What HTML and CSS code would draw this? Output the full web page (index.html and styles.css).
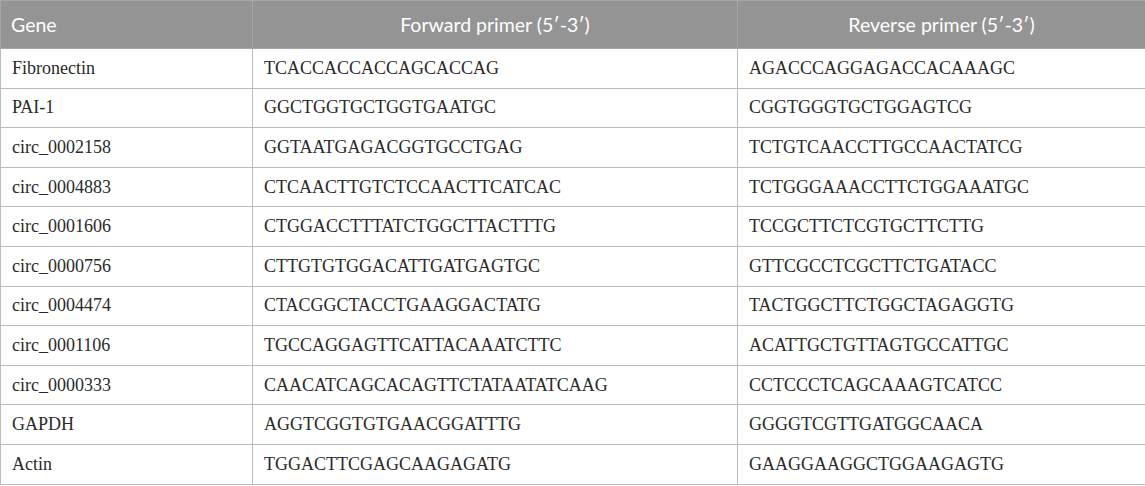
FILE: index.html
```html
<!DOCTYPE html>
<html lang="en">
<head>
<meta charset="utf-8">
<title>Primer sequences</title>
<link rel="stylesheet" href="styles.css">
</head>
<body>
<table class="primers">
  <colgroup>
    <col class="c-gene">
    <col class="c-fwd">
    <col class="c-rev">
  </colgroup>
  <thead>
    <tr>
      <th class="left">Gene</th>
      <th>Forward primer (5′-3′)</th>
      <th>Reverse primer (5′-3′)</th>
    </tr>
  </thead>
  <tbody>
    <tr><td>Fibronectin</td><td>TCACCACCACCAGCACCAG</td><td>AGACCCAGGAGACCACAAAGC</td></tr>
    <tr><td>PAI-1</td><td>GGCTGGTGCTGGTGAATGC</td><td>CGGTGGGTGCTGGAGTCG</td></tr>
    <tr><td>circ_0002158</td><td>GGTAATGAGACGGTGCCTGAG</td><td>TCTGTCAACCTTGCCAACTATCG</td></tr>
    <tr><td>circ_0004883</td><td>CTCAACTTGTCTCCAACTTCATCAC</td><td>TCTGGGAAACCTTCTGGAAATGC</td></tr>
    <tr><td>circ_0001606</td><td>CTGGACCTTTATCTGGCTTACTTTG</td><td>TCCGCTTCTCGTGCTTCTTG</td></tr>
    <tr><td>circ_0000756</td><td>CTTGTGTGGACATTGATGAGTGC</td><td>GTTCGCCTCGCTTCTGATACC</td></tr>
    <tr><td>circ_0004474</td><td>CTACGGCTACCTGAAGGACTATG</td><td>TACTGGCTTCTGGCTAGAGGTG</td></tr>
    <tr><td>circ_0001106</td><td>TGCCAGGAGTTCATTACAAATCTTC</td><td>ACATTGCTGTTAGTGCCATTGC</td></tr>
    <tr><td>circ_0000333</td><td>CAACATCAGCACAGTTCTATAATATCAAG</td><td>CCTCCCTCAGCAAAGTCATCC</td></tr>
    <tr><td>GAPDH</td><td>AGGTCGGTGTGAACGGATTTG</td><td>GGGGTCGTTGATGGCAACA</td></tr>
    <tr><td>Actin</td><td>TGGACTTCGAGCAAGAGATG</td><td>GAAGGAAGGCTGGAAGAGTG</td></tr>
  </tbody>
</table>
</body>
</html>
```

FILE: styles.css
```css
html, body {
  margin: 0;
  padding: 0;
  background: #ffffff;
}

.primers {
  width: 1145px;
  border-collapse: collapse;
  table-layout: fixed;
}

.c-gene { width: 252px; }
.c-fwd { width: 485px; }
.c-rev { width: 408px; }

.primers th {
  height: 48px;
  padding: 0 10px;
  background: #949494;
  color: #ffffff;
  font-family: Lato, "Open Sans", sans-serif;
  font-weight: 400;
  font-size: 19.5px;
  text-align: center;
  border: 1px solid #a6a6a6;
  box-sizing: border-box;
}

.primers th.left {
  text-align: left;
}

.primers td {
  height: 39.6px;
  padding: 0 10px 0 11px;
  font-family: "Liberation Serif", "Times New Roman", serif;
  font-size: 18px;
  color: #2a2a2a;
  border: 1px solid #bcbcbc;
  box-sizing: border-box;
  vertical-align: middle;
  white-space: nowrap;
}
```
